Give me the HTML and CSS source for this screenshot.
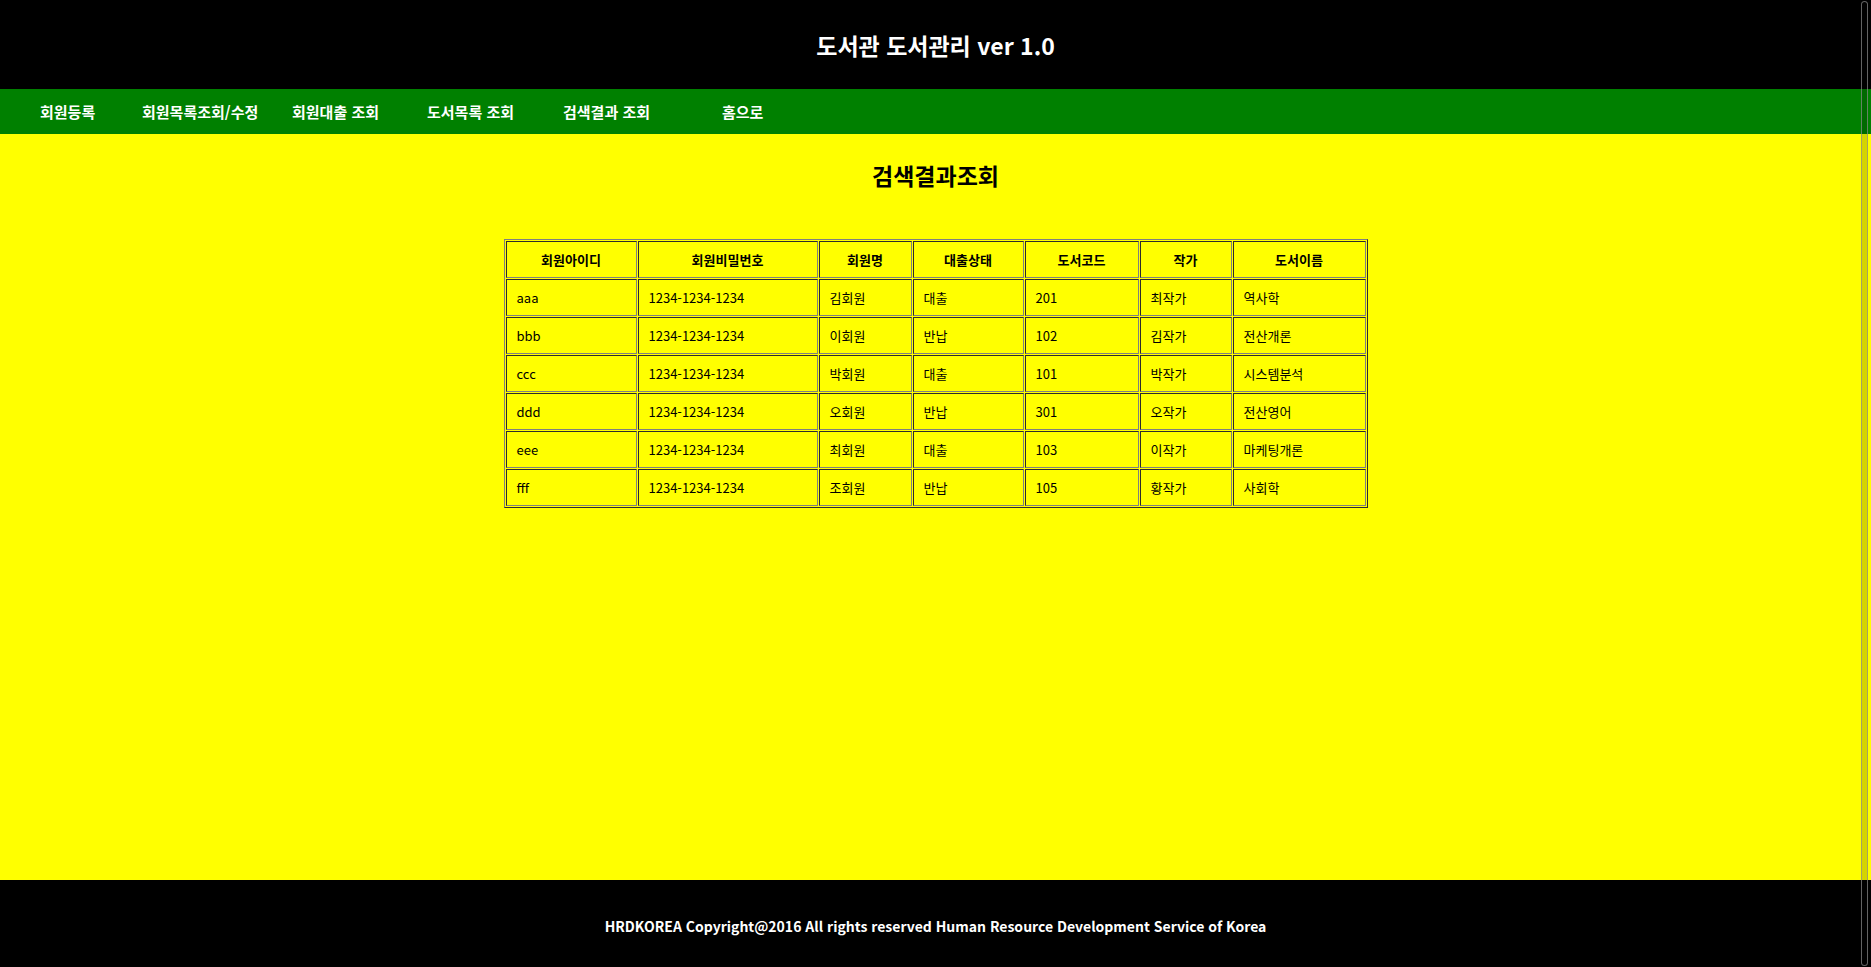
FILE: index.html
```html
<!DOCTYPE html>
<html lang="ko">
<head>
<meta charset="utf-8">
<title>검색결과조회</title>
<link rel="stylesheet" href="styles.css">
</head>
<body>
<header class="top">
  <h1 class="site-title">도서관 도서관리 ver 1.0</h1>
</header>
<nav class="menu">
  <a href="#">회원등록</a>
  <a href="#">회원목록조회/수정</a>
  <a href="#">회원대출 조회</a>
  <a href="#">도서목록 조회</a>
  <a href="#">검색결과 조회</a>
  <a href="#">홈으로</a>
</nav>
<main class="content">
  <h2 class="page-title">검색결과조회</h2>
  <table class="result">
    <thead>
      <tr>
        <th class="c1">회원아이디</th>
        <th class="c2">회원비밀번호</th>
        <th class="c3">회원명</th>
        <th class="c4">대출상태</th>
        <th class="c5">도서코드</th>
        <th class="c6">작가</th>
        <th class="c7">도서이름</th>
      </tr>
    </thead>
    <tbody>
      <tr><td>aaa</td><td>1234-1234-1234</td><td>김회원</td><td>대출</td><td>201</td><td>최작가</td><td>역사학</td></tr>
      <tr><td>bbb</td><td>1234-1234-1234</td><td>이회원</td><td>반납</td><td>102</td><td>김작가</td><td>전산개론</td></tr>
      <tr><td>ccc</td><td>1234-1234-1234</td><td>박회원</td><td>대출</td><td>101</td><td>박작가</td><td>시스템분석</td></tr>
      <tr><td>ddd</td><td>1234-1234-1234</td><td>오회원</td><td>반납</td><td>301</td><td>오작가</td><td>전산영어</td></tr>
      <tr><td>eee</td><td>1234-1234-1234</td><td>최회원</td><td>대출</td><td>103</td><td>이작가</td><td>마케팅개론</td></tr>
      <tr><td>fff</td><td>1234-1234-1234</td><td>조회원</td><td>반납</td><td>105</td><td>황작가</td><td>사회학</td></tr>
    </tbody>
  </table>
</main>
<footer class="bottom">
  <p class="copy">HRDKOREA Copyright@2016 All rights reserved Human Resource Development Service of Korea</p>
</footer>
<div class="scrollbar"></div>
</body>
</html>
```

FILE: styles.css
```css
html, body {
  margin: 0;
  padding: 0;
}
body {
  font-family: "Noto Sans CJK KR", "Noto Sans", sans-serif;
  color: #000;
  background: #ffff00;
}
.top {
  background: #000;
  height: 89px;
  display: flex;
  align-items: center;
  justify-content: center;
}
.site-title {
  margin: 0;
  color: #fff;
  font-size: 23px;
  font-weight: bold;
  line-height: 30px;
}
.menu {
  background: #008000;
  height: 45px;
  display: flex;
  align-items: center;
  padding-left: 40px;
}
.menu a {
  color: #fff;
  text-decoration: none;
  font-weight: bold;
  font-size: 15px;
  line-height: 20px;
  white-space: nowrap;
}
.menu a:nth-child(1) { width: 102px; }
.menu a:nth-child(2) { width: 150px; }
.menu a:nth-child(3) { width: 135px; }
.menu a:nth-child(4) { width: 136px; }
.menu a:nth-child(5) { width: 159px; }
.content {
  background: #ffff00;
  height: 746px;
  padding-top: 26px;
  box-sizing: border-box;
}
.page-title {
  margin: 0;
  text-align: center;
  font-size: 23px;
  font-weight: bold;
  line-height: 30px;
}
.result {
  margin: 49px auto 0;
  border: 1px outset gray;
  border-spacing: 1px;
  font-size: 13px;
}
.result th,
.result td {
  border: 1px inset gray;
  padding: 8px 10px;
  line-height: 19px;
  white-space: nowrap;
}
.result th {
  font-weight: bold;
  text-align: center;
}
.result td {
  text-align: left;
}
.c1 { width: 109px; }
.c2 { width: 158px; }
.c3 { width: 71px; }
.c4 { width: 89px; }
.c5 { width: 92px; }
.c6 { width: 70px; }
.c7 { width: 111px; }
.bottom {
  background: #000;
  height: 87px;
  display: flex;
  align-items: center;
  justify-content: center;
}
.copy {
  margin: 4px 0 0;
  color: #fff;
  font-weight: bold;
  font-size: 14px;
  line-height: 20px;
}
.scrollbar {
  position: fixed;
  top: 1px;
  bottom: 1px;
  right: 3px;
  width: 5px;
  border: 1px solid rgba(140, 140, 140, 0.7);
  border-radius: 4px;
  background: rgba(0, 0, 0, 0.17);
}
```
